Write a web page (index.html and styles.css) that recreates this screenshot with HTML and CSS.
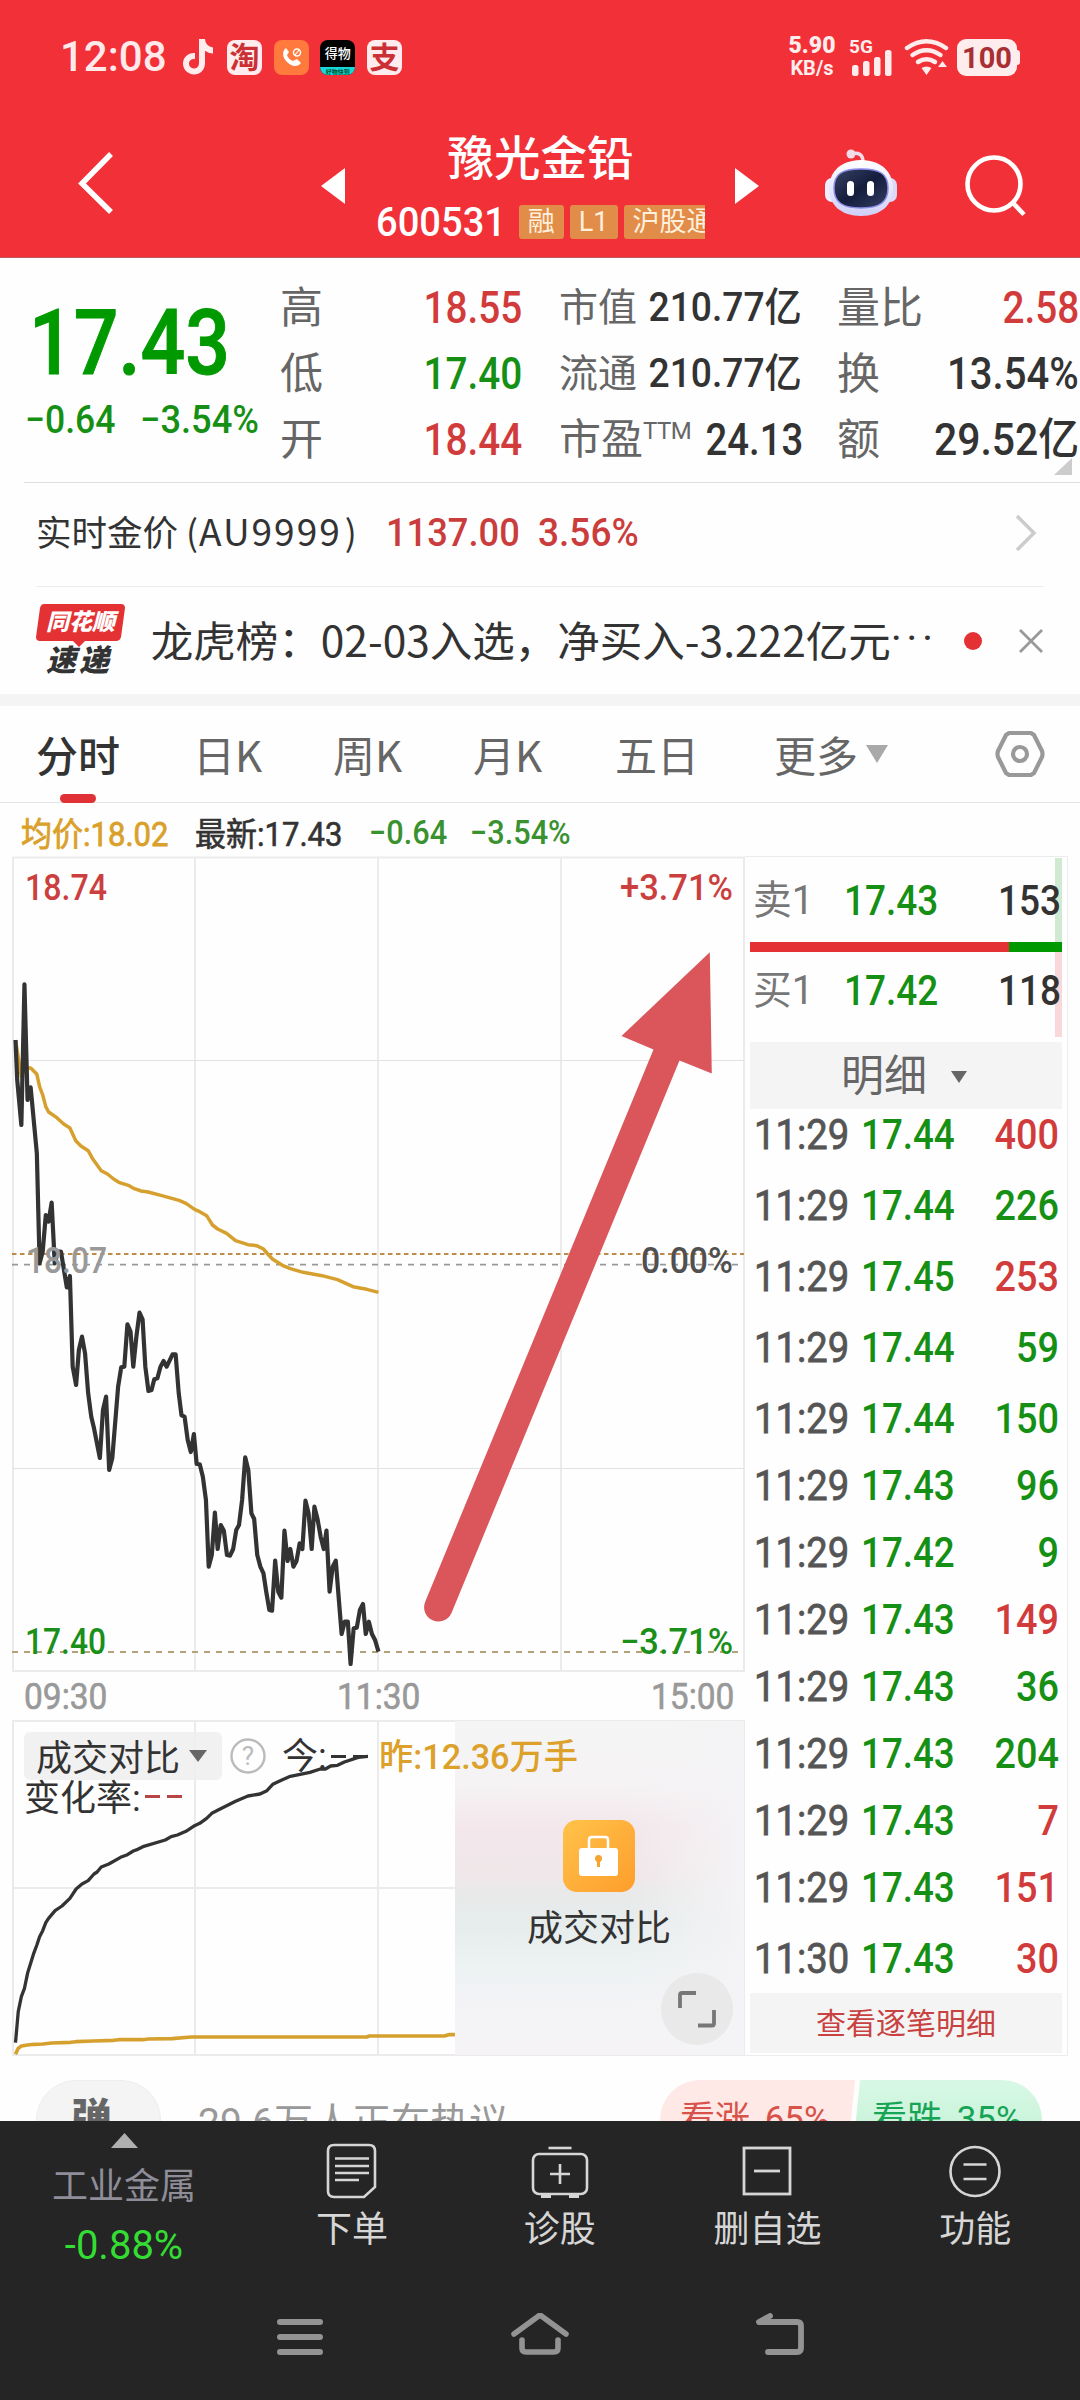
FILE: index.html
```html
<!DOCTYPE html>
<html lang="zh-CN">
<head>
<meta charset="utf-8">
<title>豫光金铅 600531</title>
<link rel="stylesheet" href="styles.css">
</head>
<body>
<div class="app">
  <header class="top">
    <div class="status">
      <div class="status-left">
        <span class="clock">12:08</span>
        <svg class="note" width="32" height="36" viewBox="0 0 32 36"><path d="M17 0h6c.4 4.800 3.500 8 8 8.400v6c-3 0-5.800-1-8-2.600v12.200c0 7-5 11.500-11 11.500S1 30.800 1 24.600c0-6.600 5.600-11.200 12-10.600v6.200c-3.200-.6-6 1.200-6 4.300 0 2.800 2.100 4.900 4.900 4.900 3.100 0 5.100-2.200 5.100-5.500z"/></svg>
        <span class="appicon light">淘</span>
        <span class="appicon orange"><svg width="35" height="35" viewBox="0 0 35 35"><path d="M12 8c-4 3-4 9 1 14s11 5 14 1l-4-4-4 2c-3-1-5-3-6-6l2-3z" fill="#fff"/><circle cx="23" cy="12.500" r="3.500" fill="none" stroke="#fff" stroke-width="1.500"/><path d="M21 15l4-5" stroke="#fff" stroke-width="1.200"/></svg></span>
        <span class="appicon black"><b>得物</b><i>好物快到</i></span>
        <span class="appicon light">支</span>
      </div>
      <div class="status-right">
        <div class="speed"><b>5.90</b><span>KB/s</span></div>
        <div class="signal"><b>5G</b>
          <svg width="42" height="26" viewBox="0 0 42 26"><g fill="#ffecec"><rect x="1" y="15" width="6.500" height="11" rx="2.500"/><rect x="12" y="11" width="6.500" height="15" rx="2.500"/><rect x="23" y="7" width="6.500" height="19" rx="2.500"/><rect x="34" y="0" width="6.500" height="26" rx="2.500"/></g></svg>
        </div>
        <svg class="wifi" width="46" height="38" viewBox="0 0 46 38"><g fill="none" stroke="#ffecec" stroke-width="4.500" stroke-linecap="round"><path d="M3 10q19.500-13.500 39 0"/><path d="M8.500 17q14-9.500 28 0"/><path d="M14 24q8.500-5.500 17 0"/></g><path d="M17.500 30q5-3 10 0l-5 7z M34 29l4.500-6 4.500 6z" fill="#ffecec"/></svg>
        <div class="battery">100</div>
      </div>
    </div>
    <div class="titlebar">
      <svg class="back" width="40" height="68" viewBox="0 0 40 68"><path d="M35 5L6 34.500 35 63" fill="none" stroke="#fff" stroke-width="5.500"/></svg>
      <svg class="prev" width="24" height="36"><path d="M24 0v36L0 18z" fill="#fff"/></svg>
      <div class="stock">
        <h1>豫光金铅</h1>
        <div class="code"><span class="codenum">600531</span><span class="tag">融</span><span class="tag">L1</span><span class="tag">沪股通</span></div>
      </div>
      <svg class="next" width="24" height="36"><path d="M0 0v36L24 18z" fill="#fff"/></svg>
      <svg class="robot" width="74" height="72" viewBox="0 0 74 72">
        <defs><linearGradient id="shell" x2="0" y2="1"><stop offset="0" stop-color="#fff"/><stop offset="1" stop-color="#cfd0f8"/></linearGradient><linearGradient id="face" x2="1" y2="1"><stop offset="0" stop-color="#384264"/><stop offset=".5" stop-color="#141d3c"/><stop offset="1" stop-color="#373e63"/></linearGradient></defs>
        <path d="M27 6q12-3 12 8" fill="none" stroke="#f3dcea" stroke-width="3.500"/><circle cx="27" cy="6" r="4.500" fill="#f3dcea"/>
        <rect x="1" y="30" width="14" height="24" rx="7" fill="#eef"/><rect x="59" y="30" width="14" height="24" rx="7" fill="#dcd8f8"/>
        <path d="M37 12c22 0 32 14 32 28 0 17-12 28-32 28S5 57 5 40c0-14 10-28 32-28z" fill="url(#shell)"/>
        <path d="M37 21c19 0 27 5 27 19s-8 20-27 20-27-6-27-20 8-19 27-19z" fill="url(#face)" stroke="#8a8ae8" stroke-width="1.500"/>
        <rect x="23" y="33" width="7" height="15" rx="3.500" fill="#fff"/><rect x="43" y="33" width="7" height="15" rx="3.500" fill="#fff"/>
      </svg>
      <svg class="search" width="62" height="64" viewBox="0 0 62 64"><g fill="none" stroke="#fff" stroke-width="4.600"><circle cx="30" cy="30" r="26.500"/><path d="M49 49l11 11.500"/></g></svg>
    </div>
  </header>

  <section class="quote">
    <div class="last">
      <div class="price">17.43</div>
      <div class="chg"><span>−0.64</span><span>−3.54%</span></div>
    </div>
    <dl class="col">
      <div><dt>高</dt><dd class="up n5">18.55</dd></div>
      <div><dt>低</dt><dd class="down n5">17.40</dd></div>
      <div><dt>开</dt><dd class="up n5">18.44</dd></div>
    </dl>
    <dl class="col">
      <div class="small"><dt>市值</dt><dd>210.77亿</dd></div>
      <div class="small"><dt>流通</dt><dd>210.77亿</dd></div>
      <div class="pe"><dt>市盈<sup>TTM</sup></dt><dd class="n5">24.13</dd></div>
    </dl>
    <dl class="col">
      <div><dt>量比</dt><dd class="up n5">2.58</dd></div>
      <div><dt>换</dt><dd class="n6">13.54%</dd></div>
      <div><dt>额</dt><dd>29.52亿</dd></div>
    </dl>
    <svg class="corner" width="18" height="17"><path d="M18 0v17H0z" fill="#ccc"/></svg>
  </section>

  <section class="gold">
    <span class="gold-name">实时金价<span class="paren open">(</span><span class="au">AU9999</span><span class="paren">)</span></span>
    <span class="gold-val">1137.00</span><span class="gold-pct">3.56%</span>
    <svg width="22" height="38" viewBox="0 0 22 38"><path d="M2 2l17 17L2 36" fill="none" stroke="#ccc" stroke-width="3.500"/></svg>
  </section>

  <section class="news">
    <div class="logo">
      <svg width="90" height="44" viewBox="0 0 90 44"><path d="M8 0h77q4 0 4 4l-4 29q-1 4-5 4H49l-6 6-6-6H4q-4 0-4-4L4 4q1-4 4-4z" fill="#e43134"/></svg>
      <b>同花顺</b><strong>速递</strong>
    </div>
    <span class="headline">龙虎榜：02-03入选，净买入-3.222亿元<span class="dots">···</span></span>
    <i class="dot"></i>
    <svg class="close" width="26" height="26" viewBox="0 0 26 26"><path d="M2 2l22 22M24 2L2 24" stroke="#999" stroke-width="2.800"/></svg>
  </section>

  <nav class="tabs">
    <span class="active">分时</span><span>日K</span><span>周K</span><span>月K</span><span>五日</span><span>更多</span>
    <svg class="more" width="22" height="18"><path d="M0 0h22L11 18z" fill="#a9a9a9"/></svg>
    <svg class="hex" width="50" height="48" viewBox="0 0 50 48"><g fill="none" stroke="#999" stroke-width="4.200" stroke-linejoin="round"><path d="M14 3h22l3 2 8 16q1 3 0 6l-8 16-3 2H14l-3-2L3 27q-1-3 0-6l8-16z"/><circle cx="25" cy="24" r="7"/></g></svg>
  </nav>

  <div class="legend"><span class="avg">均价:18.02</span><span class="new">最新:17.43</span><span class="dn">−0.64</span><span class="dn">−3.54%</span></div>

  <main class="board">
    <div class="charts">
      <svg class="minute" width="733" height="816" viewBox="12 856 733 816">
        <g stroke="#ebebeb" stroke-width="2" fill="none"><rect x="13" y="857.500" width="731" height="813.500"/><path d="M195 857v814M378 857v814M561 857v814"/><path d="M13 1060.500h731M13 1468.500h731" stroke="#e2e2e2" stroke-width="1"/></g>
        <g fill="none" stroke-width="1.800">
          <path d="M12 1254h732" stroke="#c08a4a" stroke-dasharray="4.500 3.500"/>
          <path d="M12 1264.700h732" stroke="#999" stroke-dasharray="6 6"/>
          <path d="M12 1652h732" stroke="#b5a27c" stroke-dasharray="6 6"/>
        </g>
        <g transform="translate(0 1180) scale(.34439 .33333)" fill="none" stroke-linejoin="round">
          <polyline vector-effect="non-scaling-stroke" stroke="#d6a02f" stroke-width="3.500" points="45,-420 62,-310 75,-338 90,-335 107,-317 115,-280 124,-255 133,-220 141,-204 165,-187 185,-168 203,-156 220,-118 235,-102 256,-88 270,-62 282,-45 294,-28 312,-18 330,-3 345,7 375,17 390,26 410,33 430,36 470,47 520,61 540,70 565,88 580,95 600,107 617,135 632,147 658,160 684,182 720,194 745,197 765,207 780,225 792,238 820,256 843,266 880,277 935,287 980,299 1025,320 1065,328 1099,337"/>
          <polyline vector-effect="non-scaling-stroke" stroke="#333" stroke-width="4.200" points="45,-420 50,-300 62,-165 71,-587 80,-240 89,-278 107,-80 115,250 124,215 133,105 141,125 150,68 159,250 168,215 177,215 194,322 203,288 211,560 221,615 229,510 238,470 247,520 256,640 265,710 273,745 290,834 299,690 308,650 317,870 326,835 343,620 352,562 361,560 370,433 379,455 387,560 396,470 405,398 414,418 422,560 431,633 440,630 448,598 457,595 466,560 475,543 484,560 501,523 510,523 519,640 527,706 536,710 545,780 554,816 563,762 571,852 580,853 589,890 598,960 606,1160 615,1125 624,998 632,1107 641,1035 650,1052 659,1125 668,1127 677,1107 686,1050 694,1035 703,960 712,832 721,870 730,1000 738,1017 747,1125 756,1160 765,1180 773,1235 782,1290 790,1292 799,1142 808,1235 817,1253 826,1052 835,1143 843,1107 852,1160 861,1143 870,1090 878,1107 887,962 896,1000 905,1107 913,980 922,1017 931,1070 940,1107 948,1052 957,1235 966,1160 975,1142 984,1260 992,1362 1001,1325 1010,1325 1018,1452 1027,1345 1036,1343 1045,1290 1054,1272 1062,1362 1071,1325 1080,1362 1089,1380 1099,1415"/>
        </g>
        <g class="lbl">
          <text x="25" y="900" fill="#cb3f3f" textLength="82" lengthAdjust="spacingAndGlyphs">18.74</text>
          <text x="26" y="1273" fill="#999" textLength="81" lengthAdjust="spacingAndGlyphs">18.07</text>
          <text x="25" y="1654" fill="#1a8f1a" textLength="81" lengthAdjust="spacingAndGlyphs">17.40</text>
          <text x="620" y="900" fill="#cb3f3f" textLength="113" lengthAdjust="spacingAndGlyphs">+3.71%</text>
          <text x="641" y="1273" fill="#505050" textLength="92" lengthAdjust="spacingAndGlyphs">0.00%</text>
          <text x="620" y="1654" fill="#1a8f1a" textLength="113" lengthAdjust="spacingAndGlyphs">−3.71%</text>
        </g>
        <path d="M709.800 952.300L621.500 1036l32 13.500L425.300 1601.500a14 14 0 0 0 26.200 11.500L679.500 1060.500l32.300 13z" fill="#da565b"/>
      </svg>
      <div class="axis"><span>09:30</span><span>11:30</span><span>15:00</span></div>
      <div class="compare">
        <svg class="curve" width="733" height="336" viewBox="12 1720 733 336">
          <g stroke="#ebebeb" stroke-width="2" fill="none"><rect x="13" y="1721" width="731" height="334"/><path d="M195 1721v334M378 1721v334M13 1888h442"/></g>
          <rect x="24" y="1732" width="198" height="48" rx="6" fill="#eeeeee" fill-opacity=".85"/>
        </svg>
        <div class="locked">
          <svg width="72" height="72" viewBox="0 0 72 72"><defs><linearGradient id="amber" x2="1" y2="1"><stop offset="0" stop-color="#ffc34a"/><stop offset="1" stop-color="#fe9d2c"/></linearGradient></defs><rect width="72" height="72" rx="14" fill="url(#amber)"/><path d="M26 30V20q0-3 3-3h13q3 0 3 3v10" fill="none" stroke="#fff" stroke-width="2.500"/><rect x="16" y="28" width="39" height="28" rx="3" fill="#fff"/><circle cx="35.500" cy="38.500" r="3.500" fill="#f5a431"/><path d="M34 40h3v7h-3z" fill="#f5a431"/></svg>
          <span>成交对比</span>
        </div>
        <svg class="curve" width="733" height="336" viewBox="12 1720 733 336">
          <g transform="translate(0 1660) scale(.34439 .33333)" fill="none" stroke-linejoin="round">
            <polyline vector-effect="non-scaling-stroke" stroke="#333" stroke-width="3.300" points="45,1148 53,1055 62,1010 71,985 80,940 98,880 107,855 115,830 124,812 133,788 141,775 160,752 180,738 203,715 221,687 238,672 256,662 273,642 282,636 294,621 316,612 350,592 370,584 387,573 400,568 415,560 480,540 497,530 515,525 540,514 565,497 580,490 600,475 615,460 632,451 684,424 720,408 755,402 775,392 792,373 820,359 843,349 900,337 930,327 945,327 960,318 980,316 1000,306 1040,292 1068,289"/>
            <polyline vector-effect="non-scaling-stroke" stroke="#d6a02f" stroke-width="3.600" points="45,1183 53,1165 62,1158 80,1155 100,1153 125,1152 150,1149 205,1147 221,1145 270,1143 330,1141 345,1139 415,1139 430,1137 500,1136 555,1131 1065,1131 1072,1128 1290,1128 1303,1124 1321,1124"/>
          </g>
          <path d="M189 1750h18l-9 12z" fill="#666"/>
          <circle cx="248" cy="1756" r="16.500" fill="none" stroke="#bbb" stroke-width="2.400"/>
          <g class="lbl reg" fill="#333">
            <text x="36" y="1771">成交对比</text>
            <text x="248" y="1765" text-anchor="middle" fill="#bbb" class="q">?</text>
            <text x="282" y="1769">今:</text><path d="M331 1756.500h15M353 1756.500h15" stroke="#333" stroke-width="2.800"/>
            <text x="379" y="1769" fill="#dca12a" class="med" textLength="199" lengthAdjust="spacingAndGlyphs">昨:12.36万手</text>
            <text x="24" y="1811">变化率:</text><path d="M145 1796.500h15M167 1796.500h15" stroke="#b84545" stroke-width="3"/>
          </g>
          <circle cx="697" cy="2009" r="36" fill="#e9e9e9"/>
          <path d="M680 2008v-13q0-2 2-2h14M698 2025.500h14q2 0 2-2V2010" fill="none" stroke="#777" stroke-width="3.800"/>
        </svg>
      </div>
    </div>

    <aside class="book">
      <div class="lvl sell"><span class="side">卖1</span><span class="p">17.43</span><span class="q">153</span></div>
      <div class="ratio"><i></i></div>
      <div class="lvl buy"><span class="side">买1</span><span class="p">17.42</span><span class="q">118</span></div>
      <div class="detail">明细<svg width="16" height="12"><path d="M0 0h16L8 12z" fill="#666"/></svg></div>
      <ul class="ticks">
        <li><span>11:29</span><b>17.44</b><em class="up">400</em></li>
        <li><span>11:29</span><b>17.44</b><em>226</em></li>
        <li><span>11:29</span><b>17.45</b><em class="up">253</em></li>
        <li><span>11:29</span><b>17.44</b><em>59</em></li>
        <li><span>11:29</span><b>17.44</b><em>150</em></li>
        <li class="s"><span>11:29</span><b>17.43</b><em>96</em></li>
        <li class="s"><span>11:29</span><b>17.42</b><em>9</em></li>
        <li class="s"><span>11:29</span><b>17.43</b><em class="up">149</em></li>
        <li class="s"><span>11:29</span><b>17.43</b><em>36</em></li>
        <li class="s"><span>11:29</span><b>17.43</b><em>204</em></li>
        <li class="s"><span>11:29</span><b>17.43</b><em class="up">7</em></li>
        <li class="s"><span>11:29</span><b>17.43</b><em class="up">151</em></li>
        <li><span>11:30</span><b>17.43</b><em class="up">30</em></li>
      </ul>
      <div class="all">查看逐笔明细</div>
    </aside>
  </main>

  <section class="talk">
    <span class="danmu">弹</span>
    <span class="hot">29.6万人正在热议</span>
    <div class="vote"><span class="bull">看涨 65%</span><span class="bear">看跌 35%</span></div>
  </section>

  <footer class="dock">
    <div class="actions">
      <div class="sector"><svg width="27" height="15"><path d="M13.500 0L27 15H0z" fill="#b0b0b0"/></svg><span>工业金属</span><b>-0.88%</b></div>
      <div class="act"><svg width="60" height="56" viewBox="0 0 60 56"><g fill="none" stroke="#d6d6d6" stroke-width="2.600"><path d="M12 2h35q6 0 6 6v36L42 54H12q-6 0-6-6V8q0-6 6-6z"/><path d="M13 15.500h34M13 23h34M13 30h34M13 37h24"/></g></svg><span>下单</span></div>
      <div class="act"><svg width="60" height="56" viewBox="0 0 60 56"><g fill="none" stroke="#d6d6d6" stroke-width="2.600"><path d="M18.500 5h23"/><rect x="3" y="11" width="54" height="40" rx="6"/><path d="M20 31h20M30 21v20"/><path d="M11 53h10M39 53h10" stroke-width="4"/></g></svg><span>诊股</span></div>
      <div class="act"><svg width="60" height="56" viewBox="0 0 60 56"><g fill="none" stroke="#d6d6d6" stroke-width="2.800"><rect x="7" y="5" width="46" height="46"/><path d="M17 28h26"/></g></svg><span>删自选</span></div>
      <div class="act"><svg width="60" height="56" viewBox="0 0 60 56"><g fill="none" stroke="#d6d6d6" stroke-width="2.600"><circle cx="30" cy="28.500" r="24.500"/><path d="M18.500 21.500h23M18.500 36h23"/></g></svg><span>功能</span></div>
    </div>
    <div class="sysnav">
      <svg width="64" height="48" viewBox="0 0 64 48"><path d="M12 9h40M12 24h40M12 39h40" fill="none" stroke="#939393" stroke-width="6" stroke-linecap="round"/></svg>
      <svg width="64" height="48" viewBox="0 0 64 48"><path d="M6 21L32 2l26 19M14 27v8q0 4 4 4h28q4 0 4-4v-8" fill="none" stroke="#939393" stroke-width="5.600" stroke-linecap="round" stroke-linejoin="round"/></svg>
      <svg width="64" height="48" viewBox="0 0 64 48"><path d="M22 3L11 9h38q4 0 4 4v22q0 4-4 4H20" fill="none" stroke="#939393" stroke-width="5.800" stroke-linecap="round" stroke-linejoin="round"/></svg>
    </div>
  </footer>
</div>
</body>
</html>
```
FILE: styles.css
```css
* { box-sizing: border-box; }
body { margin: 0; background: #fefefe; color: #333; font-family: Roboto, "Noto Sans CJK SC", sans-serif; }
.app { width: 1080px; height: 2400px; overflow: hidden; display: flex; flex-direction: column; white-space: nowrap; }
svg { display: block; flex: none; }
dl, dd, ul, h1 { margin: 0; padding: 0; }
.up { color: #d23b3b !important; }
.down { color: #159015 !important; }

/* header */
.top { height: 258px; flex: none; background: #f13038; color: #fff; border-bottom: 1px solid #c2555a; }
.status { height: 114px; padding: 0 60px 0 61px; display: flex; justify-content: space-between; align-items: center; }
.status-left, .status-right { display: flex; align-items: center; }
.clock { width: 105px; margin-right: 16px; font-size: 42px; font-weight: 500; line-height: 50px; color: #ffe9ea; transform: translateX(-1px); }
.note { fill: #ffecec; margin-right: 13px; }
.appicon { width: 35px; height: 35px; border-radius: 8px; margin-right: 11.700px; overflow: hidden; flex: none; font-size: 30px; line-height: 35px; text-align: center; font-weight: 700; }
.light { background: #ffecee; color: #cb3035; }
.orange { background: #ff7a3c; }
.black { background: #000; display: flex; flex-direction: column; }
.black b { font-size: 13px; line-height: 27px; font-weight: 500; }
.black i { font-size: 6px; line-height: 9px; background: #17d8d8; color: #053; font-style: normal; }
.speed { width: 46px; display: flex; flex-direction: column; align-items: center; font-weight: 700; color: #ffecec; margin-right: 16px; }
.speed b { font-size: 23px; line-height: 22px; }
.speed span { font-size: 20px; line-height: 22px; }
.signal { width: 42px; height: 38px; margin-right: 11px; color: #ffecec; position: relative; padding-top: 12px; }
.signal b { position: absolute; left: -2px; top: -1px; font-size: 19px; line-height: 19px; }
.wifi { margin-right: 7px; }
.battery { width: 60px; height: 37px; border-radius: 9px; background: #ffecec; color: #a82f34; font-size: 29px; font-weight: 700; line-height: 38px; text-align: center; position: relative; margin-right: 3px; }
.battery::after { content: ""; position: absolute; left: 60px; top: 11px; width: 3px; height: 15px; border-radius: 0 3px 3px 0; background: #ffecec; }
.titlebar { display: flex; align-items: flex-start; height: 143px; padding-left: 76px; }
.back { margin-top: 35px; }
.prev { margin: 54px 31px 0 205px; }
.stock { width: 329px; }
.stock h1 { font-size: 46.500px; font-weight: 500; line-height: 56px; height: 75px; padding-top: 17px; text-align: center; }
.code { display: flex; align-items: center; height: 66px; overflow: hidden; }
.codenum { width: 143px; font-size: 41px; font-weight: 500; line-height: 50px; transform: scaleX(.93); transform-origin: 0 50%; }
.tag { height: 34px; padding: 0 9px; margin-right: 6px; border-radius: 3px; background: #e28c49; color: #fff0dc; font-size: 27px; line-height: 34px; flex: none; position: relative; left: 3px; }
.next { margin: 54px 0 0 30px; }
.robot { margin: 34px 0 0 65px; }
.search { margin: 40px 0 0 66px; }

/* quote */
.quote { height: 225px; flex: none; position: relative; display: grid; grid-template-columns: 243px 242px 241px 242px; column-gap: 37px; padding-top: 16px; }
.last { color: #009a00; padding-left: 29px; }
.price { font-size: 90px; font-weight: 500; line-height: 100px; margin-top: 20px; transform: scaleX(.875); transform-origin: 0 50%; -webkit-text-stroke: 1px; }
.chg { display: flex; margin: 0 0 0 -4px; font-size: 39px; font-weight: 500; line-height: 52px; color: #159015; }
.chg span { width: 115px; flex: none; transform: scaleX(.91); transform-origin: 0 50%; }
.chg span + span { transform: scaleX(.93); }
.col > div { display: flex; justify-content: space-between; height: 66px; line-height: 68px; font-size: 43px; }
.col dt { color: #666; }
.col dd { font-weight: 500; font-size: 44px; transform: scaleX(.93); transform-origin: 100% 50%; }
.col .small { font-size: 39px; }
.col .small dd { font-size: 40px; }
.col .n5 { transform: scaleX(.88); }
.col .n6 { transform: scaleX(.91); }
.col .pe { font-size: 42px; }
.col .pe dd { transform: scaleX(.87); }
.col sup { font-size: 24px; line-height: 0; vertical-align: 15px; letter-spacing: -.5px; }
.corner { position: absolute; right: 8px; top: 200px; }
.quote::after { content: ""; position: absolute; left: 24px; right: 0; bottom: 0; height: 1px; background: #dedede; }

/* gold strip */
.gold { height: 104px; flex: none; margin: 0 36px; padding: 0 7px 0 0; display: flex; align-items: center; border-bottom: 1px solid #ececec; }
.gold-name { width: 350px; font: 35.500px/40px "Noto Sans CJK SC", sans-serif; margin-top: -8px; }
.paren { padding: 0 4px 0 3px; }
.open { padding: 0 1px 0 8px; }
.au { font-size: 37px; letter-spacing: 2px; }
.gold-val, .gold-pct { font-size: 39px; font-weight: 500; color: #cb3d3d; transform: scaleX(.93); transform-origin: 0 50%; margin-top: -3px; }
.gold-val { width: 152px; }
.gold-pct { transform: scaleX(.95); }
.gold svg { margin-left: auto; margin-top: -4px; }

/* news strip */
.news { height: 107px; flex: none; padding: 0 36px; display: flex; align-items: center; }
.logo { width: 115px; height: 76px; position: relative; }
.logo svg { position: absolute; left: 0; top: 1px; }
.logo b { position: absolute; left: 10px; top: 3px; color: #fff; font-size: 23px; line-height: 34px; font-style: italic; font-weight: 900; }
.logo strong { position: absolute; left: 10px; top: 41px; font-size: 30px; line-height: 34px; font-style: italic; font-weight: 900; letter-spacing: 3px; }
.headline { width: 806px; font: 42.500px/56px "Noto Sans CJK SC", sans-serif; margin-top: -4px; display: flex; }
.dots { font-family: Roboto, sans-serif; letter-spacing: 4.500px; }
.dot { width: 18px; height: 18px; border-radius: 50%; background: #e43134; margin-left: 9px; }
.close { margin-left: 36px; }

/* period tabs */
.tabs { height: 109px; flex: none; border-top: 12px solid #f4f4f4; border-bottom: 1px solid #e4e4e4; display: flex; align-items: center; padding-left: 36px; font: 42px/97px "Noto Sans CJK SC", sans-serif; color: #666; position: relative; }
.tabs span { width: 140px; margin-top: -2px; }
.tabs span:nth-child(1) { width: 157px; }
.tabs span:nth-child(4) { width: 142px; }
.tabs span:nth-child(5) { width: 159px; }
.tabs span:nth-child(6) { width: 92px; }
.tabs .active { color: #333; font-weight: 500; position: relative; }
.tabs .active::after { content: ""; position: absolute; left: 24px; bottom: -1px; width: 36px; height: 9px; border-radius: 5px; background: #e03236; }
.hex { margin-left: 107px; }

.legend { height: 53px; flex: none; display: flex; align-items: center; padding: 5px 0 0 21px; font-size: 33px; font-weight: 500; }
.legend span { transform: scaleX(.93); transform-origin: 0 50%; width: 101px; }
.legend .avg { color: #d9a12b; width: 174px; transform: scaleX(.94); font-weight: 400; -webkit-text-stroke: .8px; }
.legend .new { width: 174px; transform: scaleX(.94); font-weight: 400; -webkit-text-stroke: .6px; }
.legend .dn { color: #3a9130; }

/* charts and order book */
.board { flex: none; display: flex; padding-left: 12px; height: 1200px; }
.charts { width: 733px; }
.lbl { font-size: 36px; font-weight: 500; }
.reg { font-weight: 400; }
.reg .med { font-weight: 500; font-size: 35px; }
.reg .q { font-size: 26px; }
.axis { height: 48px; display: flex; justify-content: space-between; color: #999; font-size: 36px; line-height: 50px; padding: 0 12px 0 12px; -webkit-text-stroke: .6px; }
.axis span { width: 82px; transform: scaleX(.93); transform-origin: 0 50%; }
.axis span:nth-child(2) { margin-right: 1px; }
.compare { height: 336px; position: relative; }
.curve { position: absolute; left: 0; top: 0; }
.locked { position: absolute; left: 443px; top: 1px; width: 289px; height: 334px; padding: 99px 0 0 108px; background: linear-gradient(90deg, transparent 60%, #f4f3f5 100%), linear-gradient(#f5f5f5 0%, #f5f2f4 20%, #f3e7eb 32%, #efe7e9 47%, #e9e9e9 51%, #e6ecec 60%, #edf2f3 74%, #f3f3f6 84%, #f5f3f6 100%); }
.locked span { display: block; margin: 12px 0 0 -36px; font-size: 36px; line-height: 50px; }

.book { width: 323px; height: 1200px; border: 1px solid #ececec; border-left: 0; padding: 1px 5px 0 5px; }
.lvl { height: 84px; padding-left: 3px; display: grid; grid-template-columns: 91px 110px 1fr; font-size: 42px; font-weight: 500; line-height: 86px; border-right: 7px solid #cfead0; }
.lvl span { transform: scaleX(.88); transform-origin: 0 50%; }
.lvl .side { color: #777; font-weight: 400; font-size: 40px; transform: scaleX(.97); }
.lvl .p { color: #159015; }
.lvl .q { text-align: right; margin-right: -6px; transform-origin: 100% 50%; }
.ratio { height: 10px; background: #009a00; }
.ratio i { display: block; width: 83%; height: 10px; background: #e43134; }
.buy { height: 85px; border-right-color: #f8d8d8; line-height: 78px; }
.detail { height: 67px; margin-top: 5px; background: #f4f4f4; color: #666; font-size: 43px; line-height: 76px; display: flex; justify-content: center; align-items: center; gap: 24px; padding-right: 4px; }
.detail svg { margin-top: 2px; }
.ticks { list-style: none; font-size: 42px; font-weight: 500; line-height: 73px; padding: 0 4px; margin-top: -11px; }
.ticks li { height: 71px; display: grid; grid-template-columns: 107px 110px 1fr; }
.ticks .s { height: 67px; line-height: 65px; }
.ticks span { color: #555; font-weight: 400; -webkit-text-stroke: .8px; transform: scaleX(.91); transform-origin: 0 50%; }
.ticks b { color: #159015; font-weight: 500; transform: scaleX(.875); transform-origin: 0 50%; }
.ticks em { color: #159015; font-style: normal; text-align: right; transform: scaleX(.9); transform-origin: 100% 50%; margin-right: -1px; }
.all { height: 60px; background: #f4f4f4; color: #c94242; font-size: 30px; line-height: 62px; text-align: center; }

/* discussion strip, partly under the dock */
.talk { height: 65px; flex: none; overflow: hidden; display: flex; align-items: flex-start; padding: 24px 36px 0; }
.danmu { width: 125px; height: 80px; border-radius: 40px; border: 1px solid #eee; background: #f4f4f4; color: #666; font-size: 40px; font-weight: 900; line-height: 75px; text-align: center; flex: none; padding-right: 14px; }
.hot { margin-left: 37px; width: 462px; font-size: 39px; line-height: 86px; color: #999; }
.vote { display: flex; gap: 3px; width: 384px; font-size: 35px; line-height: 80px; height: 80px; word-spacing: 6px; }
.bull, .bear { background: #fee9e7; color: #d8524a; width: 195px; padding-left: 20px; border-radius: 40px 0 0 40px; clip-path: polygon(0 0, 100% 0, calc(100% - 8px) 100%, 0 100%); }
.bear { background: linear-gradient(#d8f8e5, #bff0d2); color: #17a457; width: 190px; margin-left: -6px; border-radius: 0 40px 40px 0; clip-path: polygon(8px 0, 100% 0, 100% 100%, 0 100%); }

/* dock */
.dock { flex: 1; background: #252525; }
.actions { height: 168px; display: flex; color: #d6d6d6; font-size: 36px; }
.sector { width: 248px; display: flex; flex-direction: column; align-items: center; padding-top: 12px; }
.sector span { color: #8f8d98; line-height: 50px; margin-top: 14px; }
.sector b { color: #33dd33; font-size: 40px; font-weight: 400; line-height: 50px; margin-top: 9px; }
.act { width: 207.800px; display: flex; flex-direction: column; align-items: center; padding-top: 22px; }
.act span { line-height: 50px; margin-top: 6px; }
.sysnav { display: flex; justify-content: center; gap: 176px; padding-top: 24px; }
```
